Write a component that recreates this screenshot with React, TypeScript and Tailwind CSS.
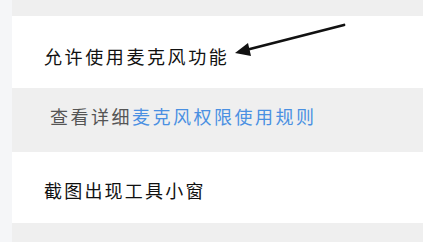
import React from "react";

export default function App() {
  const font = { fontFamily: '"Noto Sans CJK SC", sans-serif' };
  return (
    <div className="relative w-[423px] h-[242px] overflow-hidden bg-[#f5f6f8] flex" style={font}>
      <div className="w-[12px] shrink-0 bg-[#f5f6f8]" />
      <div className="flex-1 flex flex-col bg-[#efefef]">
        <div className="h-[16px]" />
        <div className="bg-white h-[72px] pt-[30px] pl-[32px] text-[18px] leading-[20px] tracking-[2.6px] text-[#111]">
          允许使用麦克风功能
        </div>
        <div className="h-[64px] pt-[18px] pl-[38px] text-[18px] leading-[20px] tracking-[2.5px] text-[#555]">
          查看详细<span className="text-[#4a90e2]">麦克风权限使用规则</span>
        </div>
        <div className="bg-white h-[71px] pt-[28px] pl-[32px] text-[18px] leading-[20px] tracking-[2.2px] text-[#111]">
          截图出现工具小窗
        </div>
      </div>
      <svg className="absolute left-0 top-0" width="423" height="242" viewBox="0 0 423 242">
        <line x1="344" y1="25" x2="246" y2="50" stroke="#111" strokeWidth="2.8" strokeLinecap="round" />
        <polygon points="235,53 248,43 251,56" fill="#111" />
      </svg>
    </div>
  );
}
